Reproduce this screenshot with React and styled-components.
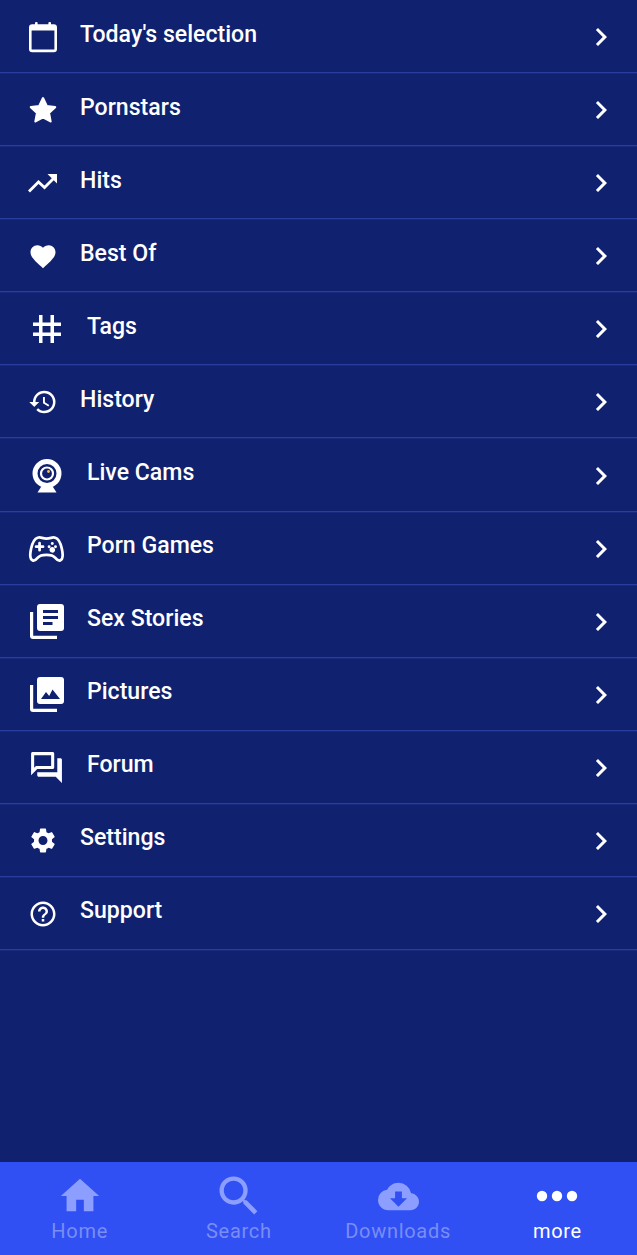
import React from 'react';
import styled, { createGlobalStyle } from 'styled-components';
import {
  MdFavorite, MdHistory,
  MdOutlineForum, MdSettings, MdHelpOutline, MdHome, MdSearch, MdCloudDownload,
  MdChevronRight,
} from 'react-icons/md';
import { IoGameControllerOutline } from 'react-icons/io5';

const NAVY = '#102170';

const GlobalStyle = createGlobalStyle`
  html, body { margin: 0; padding: 0; height: 100%; background: ${NAVY}; }
  body { font-family: Roboto, "Liberation Sans", sans-serif; }
  #root { height: 100%; }
`;

const Screen = styled.div`
  display: flex;
  flex-direction: column;
  height: 1255px;
  background: ${NAVY};
  overflow: hidden;
`;

const List = styled.ul`
  flex: 1;
  margin: 0;
  padding: 0;
  list-style: none;
`;

const Row = styled.li`
  display: flex;
  align-items: center;
  box-sizing: border-box;
  height: 73.08px;
  padding: 0 18px 0 28px;
  border-bottom: 1px solid #293d9c;
  box-shadow: 0 1px 0 #182a80;
`;

const IconSlot = styled.span`
  display: flex;
  align-items: center;
  justify-content: center;
  flex: none;
  width: ${props => (props.$wide ? 37 : 30)}px;
  height: 38px;
  margin-top: 2px;
  color: #fff;
`;

const Label = styled.span`
  flex: 1;
  margin-left: 22px;
  margin-bottom: 4px;
  font-size: 23.1px;
  font-weight: 500;
  color: #fff;
`;

const Chevron = styled.span`
  display: flex;
  margin-top: 2px;
  color: #fff;
`;

const GameIcon = styled(IoGameControllerOutline)`
  path { stroke-width: 38px; }
`;

const TabBar = styled.nav`
  display: grid;
  grid-template-columns: repeat(4, 1fr);
  flex: none;
  height: 93px;
  background: #3050f3;
`;

const Tab = styled.div`
  display: flex;
  flex-direction: column;
  align-items: center;
  color: ${props => (props.$active ? '#fff' : '#8c9eff')};
`;

const TabIcon = styled.span`
  display: flex;
  align-items: center;
  justify-content: center;
  height: 44px;
  margin-top: 12px;
`;

const TabLabel = styled.span`
  font-size: 20px;
  letter-spacing: 0.7px;
  line-height: 26px;
  color: ${props => (props.$active ? '#fff' : '#7a8df5')};
`;

const CalendarIcon = () => (
  <svg width="30" height="32" viewBox="0 0 30 32" fill="none">
    <rect x="2.300" y="4.500" width="25.400" height="25.400" rx="2" stroke="currentColor" strokeWidth="2.600" />
    <rect x="2.300" y="4.500" width="25.400" height="5" fill="currentColor" />
    <rect x="7" y="1" width="2.600" height="5" rx="1" fill="currentColor" />
    <rect x="20.400" y="1" width="2.600" height="5" rx="1" fill="currentColor" />
  </svg>
);

const StarIcon = () => (
  <svg width="34" height="34" viewBox="0 0 32 32">
    <path
      fill="currentColor"
      stroke="currentColor"
      strokeWidth="2.500"
      strokeLinejoin="round"
      d="M16 3.500l3.900 8.300 9 1.100-6.600 6.200 1.700 9-8-4.500-8 4.500 1.700-9-6.600-6.200 9-1.100z"
    />
  </svg>
);

const TrendIcon = () => (
  <svg width="30" height="20" viewBox="0 0 30 20" fill="none">
    <path stroke="currentColor" strokeWidth="2.800" d="M1 18.500l9.500-9.500 6 5.500L27 4" />
    <path fill="currentColor" d="M19.500 1H29v9.500z" />
  </svg>
);

const HashIcon = () => (
  <svg width="28" height="28" viewBox="0 0 28 28">
    <path
      fill="currentColor"
      d="M6 0h3.500v7.500h8V0H21v7.500h7V11h-7v6.500h7V21h-7v7h-3.500v-7h-8v7H6v-7H0v-3.500h6V11H0V7.500h6zM9.500 11v6.500h8V11z"
    />
  </svg>
);

const WebcamIcon = () => (
  <svg width="30" height="34" viewBox="0 0 30 34">
    <path
      fillRule="evenodd"
      fill="currentColor"
      d="M15 0a14.500 14.500 0 1 1 0 29a14.500 14.500 0 1 1 0-29zM15 5a9.500 9.500 0 1 0 0 19a9.500 9.500 0 1 0 0-19z"
    />
    <circle cx="15" cy="14.500" r="6" fill="none" stroke="currentColor" strokeWidth="2.200" />
    <circle cx="16.500" cy="12.500" r="1.400" fill="#e8c46a" />
    <path fill="currentColor" d="M9 28h12l3.500 5.500h-19z" />
  </svg>
);

// the white sheet with another sheet showing behind it, used by two rows
const SheetStack = ({ children }) => (
  <svg width="34" height="35" viewBox="0 0 34 35">
    <rect x="7" y="0" width="27" height="27" rx="3" fill="currentColor" />
    <path fill="currentColor" d="M0 8h3.200v23.800H27V35H3a3 3 0 0 1-3-3z" />
    {children}
  </svg>
);

const NewsIcon = () => (
  <SheetStack>
    <rect x="13" y="6" width="15" height="3" fill={NAVY} />
    <rect x="13" y="12" width="15" height="3" fill={NAVY} />
    <rect x="13" y="18" width="9.500" height="3" fill={NAVY} />
  </SheetStack>
);

const PictureIcon = () => (
  <SheetStack>
    <path fill={NAVY} d="M11 22l5-7 3.200 4 3.300-6.500L30 22z" />
  </SheetStack>
);

const DotsIcon = () => (
  <svg width="42" height="12" viewBox="0 0 42 12">
    <circle cx="6" cy="6" r="5.200" fill="currentColor" />
    <circle cx="21" cy="6" r="5.200" fill="currentColor" />
    <circle cx="36" cy="6" r="5.200" fill="currentColor" />
  </svg>
);

const items = [
  { label: "Today's selection", icon: <CalendarIcon /> },
  { label: 'Pornstars', icon: <StarIcon /> },
  { label: 'Hits', icon: <TrendIcon /> },
  { label: 'Best Of', icon: <MdFavorite size={35} /> },
  { label: 'Tags', icon: <HashIcon />, wide: true },
  { label: 'History', icon: <MdHistory size={36} /> },
  { label: 'Live Cams', icon: <WebcamIcon />, wide: true },
  { label: 'Porn Games', icon: <GameIcon size={44} />, wide: true },
  { label: 'Sex Stories', icon: <NewsIcon />, wide: true },
  { label: 'Pictures', icon: <PictureIcon />, wide: true },
  { label: 'Forum', icon: <MdOutlineForum size={43} />, wide: true },
  { label: 'Settings', icon: <MdSettings size={33} /> },
  { label: 'Support', icon: <MdHelpOutline size={36} /> },
];

const tabs = [
  { label: 'Home', icon: <MdHome size={46} /> },
  { label: 'Search', icon: <MdSearch size={52} /> },
  { label: 'Downloads', icon: <MdCloudDownload size={41} /> },
  { label: 'more', icon: <DotsIcon />, active: true },
];

export default function App() {
  return (
    <Screen>
      <GlobalStyle />
      <List>
        {items.map(item => (
          <Row key={item.label}>
            <IconSlot $wide={item.wide}>{item.icon}</IconSlot>
            <Label>{item.label}</Label>
            <Chevron><MdChevronRight size={36} /></Chevron>
          </Row>
        ))}
      </List>
      <TabBar>
        {tabs.map(tab => (
          <Tab key={tab.label} $active={tab.active}>
            <TabIcon>{tab.icon}</TabIcon>
            <TabLabel $active={tab.active}>{tab.label}</TabLabel>
          </Tab>
        ))}
      </TabBar>
    </Screen>
  );
}
